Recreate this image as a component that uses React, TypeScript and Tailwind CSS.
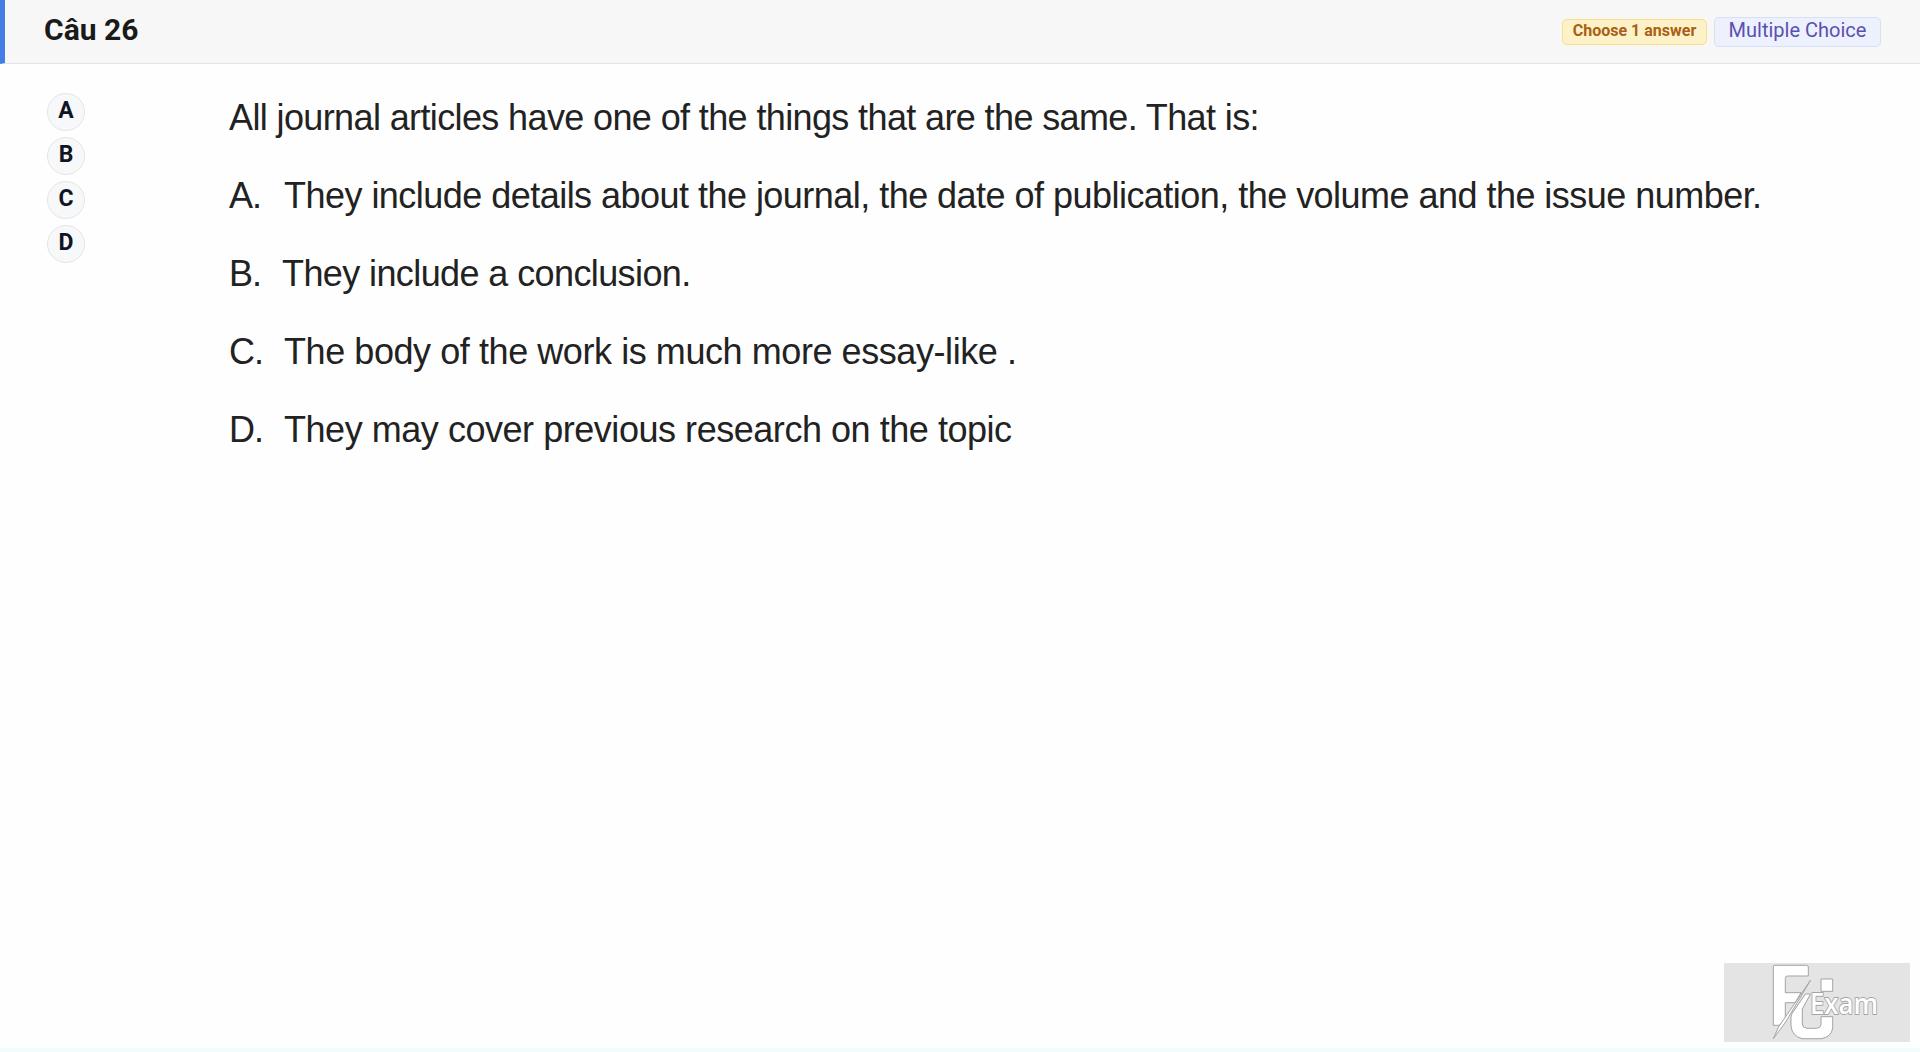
import React from 'react';

interface AnswerLine {
  letter: string;
  text: string;
  indent: string;
  tracking: string;
}

const question = 'All journal articles have one of the things that are the same. That is:';

const answers: AnswerLine[] = [
  {
    letter: 'A',
    text: 'They include details about the journal, the date of publication, the volume and the issue number.',
    indent: 'w-[55px]',
    tracking: 'tracking-[-0.53px]'
  },
  { letter: 'B', text: 'They include a conclusion.', indent: 'w-[53px]', tracking: 'tracking-[-0.6px]' },
  { letter: 'C', text: 'The body of the work is much more essay-like .', indent: 'w-[55px]', tracking: 'tracking-[-0.43px]' },
  { letter: 'D', text: 'They may cover previous research on the topic', indent: 'w-[55px]', tracking: 'tracking-[-0.46px]' }
];

const Logo: React.FC = () => (
  <svg
    viewBox="0 0 186 79"
    className="h-[79px] w-[186px] bg-[#e4e4e4]"
    fill="#fff"
    stroke="#a3a3a3"
    strokeWidth="1"
    strokeLinejoin="round"
  >
    <path d="M51 2.3H82.5Q84.3 2.3 84.3 4V13H63.5Q61.3 13 61.3 15.5V29.7H77L71 39.7H61.3V55.3L55.3 62.3H49.3V4Q49.3 2.3 51 2.3Z" />
    <path d="M86.7 17L61 60L49.3 75.7L54.5 64L69 43Z" />
    <path d="M81.5 31L69 49Q67 51.5 67 54V63Q68 73 78 75.7H97Q107.5 74 108.7 65V53.7H97V61.5Q96.5 65.3 92.5 65.3H82.7Q78.6 65 78.3 61V46L86.5 31Z" />
    <rect x="97" y="16" width="11.7" height="12.3" />
    <text
      x="86"
      y="51"
      textLength="68"
      lengthAdjust="spacingAndGlyphs"
      paintOrder="stroke"
      strokeWidth="1.8"
      className="font-['Open_Sans',sans-serif] text-[28px] font-semibold"
    >
      Exam
    </text>
  </svg>
);

const App: React.FC = () => {
  return (
    <div className="flex h-[1052px] w-[1920px] flex-col overflow-hidden border-b-4 border-[#f0fcfe] bg-[#fefefe] font-[Roboto,sans-serif]">
      {/* Header */}
      <header className="flex h-16 shrink-0 items-center justify-between border-b border-l-[5px] border-b-[#e2e3e5] border-l-[#437de6] bg-[#f7f7f7] pr-[39px] pl-[39px]">
        <h1 className="pb-1 text-[30px] leading-none font-bold text-[#1a1a1a]">Câu 26</h1>
        <div className="flex items-center gap-[7px]">
          <span className="mt-px flex h-[26px] w-[145px] items-center justify-center rounded-[5px] border border-[#fbdf8a] bg-[#fdf2c7] pb-[3px] text-base leading-none font-bold whitespace-nowrap text-[#a85f16]">
            Choose 1 answer
          </span>
          <span className="flex h-[30px] w-[167px] items-center justify-center rounded-[5px] border border-[#d9dff5] bg-[#edf1fd] pb-[3px] text-xl leading-none whitespace-nowrap text-[#5b50b0]">
            Multiple Choice
          </span>
        </div>
      </header>

      {/* Question */}
      <main className="flex grow">
        <div className="flex w-[229px] shrink-0 flex-col gap-1.5 pt-[29px] pl-[47px]">
          {answers.map((answer) => (
            <button
              key={answer.letter}
              className="flex size-[38px] items-center justify-center rounded-full border border-[#e4e5e7] bg-[#f7f8f9] pb-[3px] text-[23px] leading-none font-bold text-[#111422]"
            >
              {answer.letter}
            </button>
          ))}
        </div>
        <div className="pt-[15px] font-['Liberation_Sans',Arial,sans-serif] text-[36px] leading-[78px] whitespace-pre text-[#222]">
          <p className="tracking-[-0.62px]">{question}</p>
          {answers.map((answer) => (
            <div key={answer.letter} className="flex">
              <span className={`shrink-0 tracking-[-1px] ${answer.indent}`}>{answer.letter}.</span>
              <p className={answer.tracking}>{answer.text}</p>
            </div>
          ))}
        </div>
      </main>

      <footer className="flex justify-end pr-2.5 pb-1.5">
        <Logo />
      </footer>
    </div>
  );
};

export default App;
